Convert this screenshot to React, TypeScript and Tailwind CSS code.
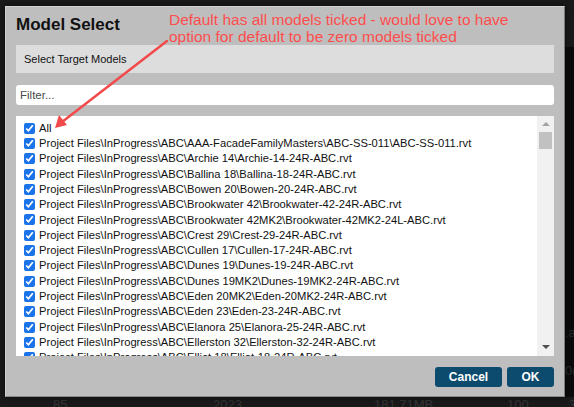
import React from 'react'

const base = ['Project Files', 'InProgress', 'ABC']

const models: [string, string][] = [
  ['AAA-FacadeFamilyMasters\\ABC-SS-011', 'ABC-SS-011.rvt'],
  ['Archie 14', 'Archie-14-24R-ABC.rvt'],
  ['Ballina 18', 'Ballina-18-24R-ABC.rvt'],
  ['Bowen 20', 'Bowen-20-24R-ABC.rvt'],
  ['Brookwater 42', 'Brookwater-42-24R-ABC.rvt'],
  ['Brookwater 42MK2', 'Brookwater-42MK2-24L-ABC.rvt'],
  ['Crest 29', 'Crest-29-24R-ABC.rvt'],
  ['Cullen 17', 'Cullen-17-24R-ABC.rvt'],
  ['Dunes 19', 'Dunes-19-24R-ABC.rvt'],
  ['Dunes 19MK2', 'Dunes-19MK2-24R-ABC.rvt'],
  ['Eden 20MK2', 'Eden-20MK2-24R-ABC.rvt'],
  ['Eden 23', 'Eden-23-24R-ABC.rvt'],
  ['Elanora 25', 'Elanora-25-24R-ABC.rvt'],
  ['Ellerston 32', 'Ellerston-32-24R-ABC.rvt'],
  ['Elliot 18', 'Elliot-18-24R-ABC.rvt'],
]

const rows = ['All', ...models.map(([dir, file]) => [...base, dir, file].join('\\'))]

function Row({ label }: { label: string }) {
  return (
    <label className="flex h-[15.3px] items-center gap-[4px] whitespace-nowrap">
      <input
        type="checkbox"
        defaultChecked
        className="m-0 size-[11px] shrink-0 accent-[#1a73e8]"
      />
      <span>{label}</span>
    </label>
  )
}

function ModelSelect() {
  return (
    <div className="absolute left-[5px] top-[6px] flex h-[391px] w-[560px] flex-col border border-t-[#d4d4d4] border-l-[#d0d0d0] border-r-[#7a7a7a] border-b-[#8a8a8a] bg-[#bebebe] px-[10px] pt-[6px] shadow-[0_0_6px_rgba(0,0,0,0.6)]">
      <h1 className="h-[24px] text-[17px] font-bold leading-[24px] text-[#111]">Model Select</h1>

      <div className="mt-[8px] flex h-[28px] items-center bg-[#dddddd] px-[8px] text-[11px] text-[#111]">
        Select Target Models
      </div>

      <input
        placeholder="Filter..."
        className="mt-[12px] h-[20px] rounded-[3px] bg-white px-[4px] text-[11.5px] text-[#111] outline-none placeholder:text-[#4a4a4a]"
      />

      <div className="mt-[11px] flex h-[240px] bg-white">
        <div className="min-w-0 flex-1 overflow-hidden pl-[8px] pt-[4.5px] text-[11.2px] text-[#111]">
          {rows.map((r) => (
            <Row key={r} label={r} />
          ))}
        </div>
        <div className="flex w-[17px] flex-col items-center bg-[#f1f1f1]">
          <span className="mt-[6px] h-0 w-0 border-x-[4px] border-b-[4px] border-x-transparent border-b-[#a3a3a3]" />
          <span className="mt-[6px] h-[17px] w-[13px] bg-[#c1c1c1]" />
          <span className="mt-auto mb-[7px] h-0 w-0 border-x-[4px] border-t-[4px] border-x-transparent border-t-[#505050]" />
        </div>
      </div>

      <div className="mt-[11px] flex justify-end gap-[5px]">
        <button className="h-[20px] w-[67px] rounded-[3px] bg-[#0c4a6e] text-[12px] font-bold text-white">
          Cancel
        </button>
        <button className="h-[20px] w-[47px] rounded-[3px] bg-[#0c4a6e] text-[12px] font-bold text-white">
          OK
        </button>
      </div>
    </div>
  )
}

function Annotation() {
  return (
    <>
      <p className="absolute left-[169px] top-[12px] text-[15.5px] leading-[16.5px] text-[#ff4d4d]">
        Default has all models ticked - would love to have
        <br />
        option for default to be zero models ticked
      </p>
      <svg className="absolute left-0 top-0" width="574" height="407" viewBox="0 0 574 407">
        <line x1="167" y1="41" x2="62" y2="122" stroke="#f24a4a" strokeWidth="2.5" strokeLinecap="round" />
        <path d="M55 128 L59 115 L67 125 Z" fill="#f24a4a" />
      </svg>
    </>
  )
}

export default function App() {
  return (
    <div className="relative h-[407px] w-[574px] overflow-hidden bg-[#1a1a1a] font-['Liberation_Sans',Arial,sans-serif]">
      <div className="h-[47px]" />
      <div className="flex h-[350px] justify-end">
        <div className="flex w-[9px] flex-col bg-[#0b0b0b] text-[13px] text-[#2c2c2c]">
          <span className="mt-[276px] whitespace-nowrap">.a</span>
          <span className="mt-[18px] whitespace-nowrap">0(</span>
        </div>
      </div>
      <div className="grid grid-cols-[53px_160px_161px_133px_auto] pt-[1px] text-[13px] leading-[13px] text-[#353535]">
        <span />
        <span>85</span>
        <span>2023</span>
        <span>181.71MB</span>
        <span className="flex gap-[40px]">
          <span>100</span>
          <span>30</span>
        </span>
      </div>

      <ModelSelect />
      <Annotation />
    </div>
  )
}
